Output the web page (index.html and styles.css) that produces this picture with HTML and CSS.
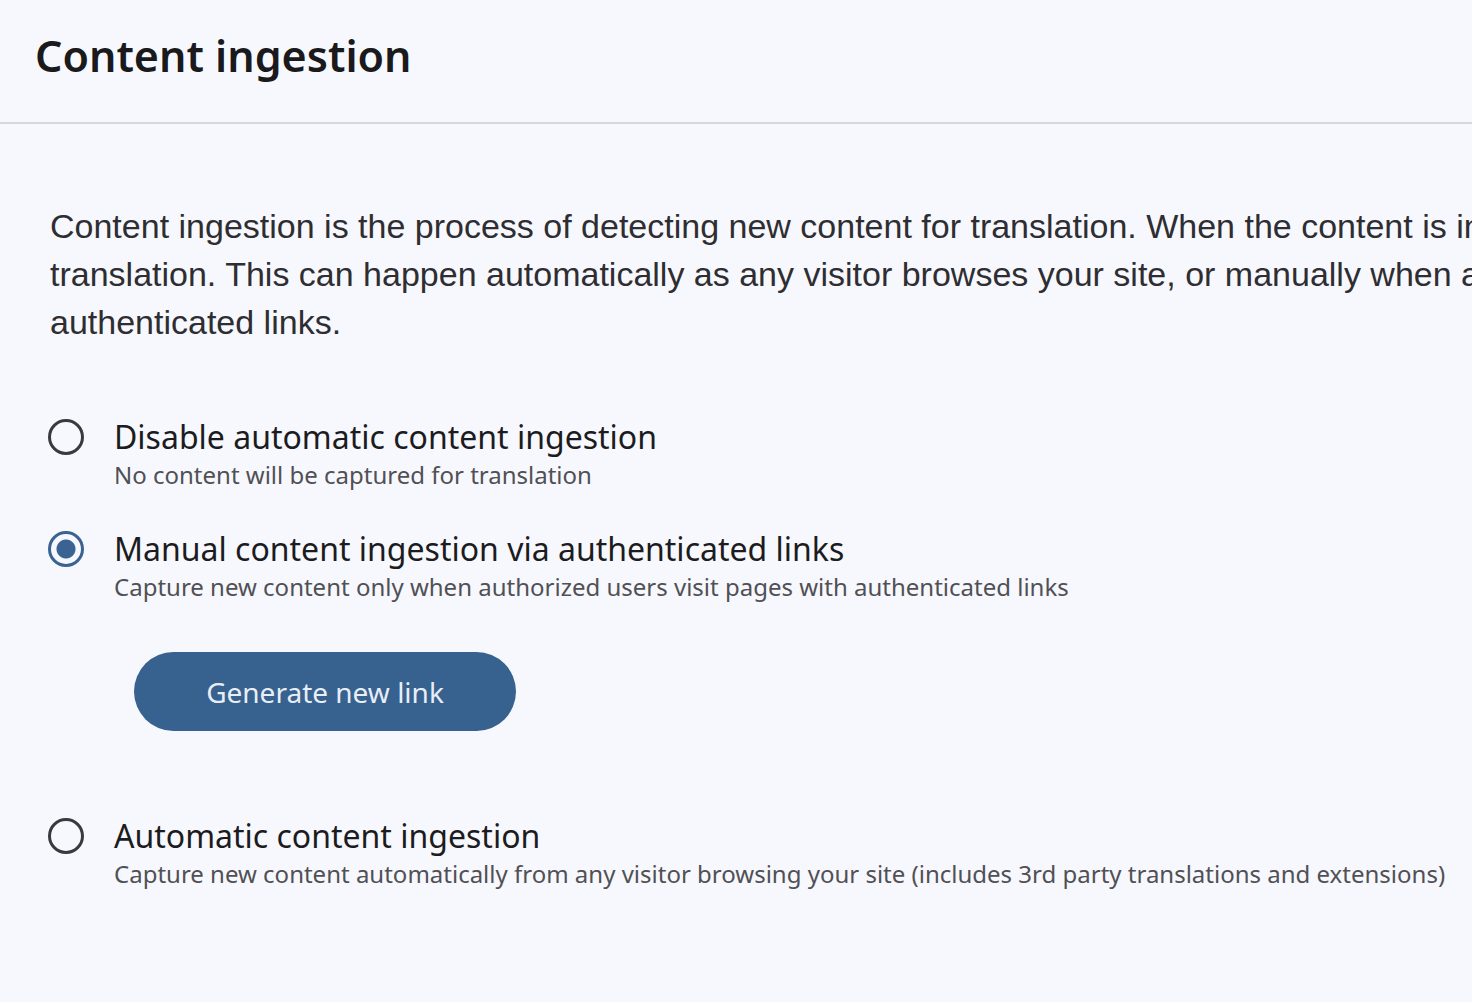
FILE: index.html
```html
<!DOCTYPE html>
<html lang="en">
<head>
    <meta charset="UTF-8">
    <meta name="viewport" content="width=device-width, initial-scale=1.0">
    <title>Content ingestion</title>
    <link rel="stylesheet" href="styles.css">
</head>
<body>
    <div class="page-header">
        <h1>Content ingestion</h1>
    </div>

    <div class="page-body">
        <p class="intro">
            Content ingestion is the process of detecting new content for translation. When the content is ingested, it is queued up for<br>
            translation. This can happen automatically as any visitor browses your site, or manually when authorized users visit pages with<br>
            authenticated links.
        </p>

        <div class="option-list">
            <label class="option">
                <input type="radio" name="ingestion" value="disabled">
                <span class="option-text">
                    <span class="option-title">Disable automatic content ingestion</span>
                    <span class="option-desc">No content will be captured for translation</span>
                </span>
            </label>

            <label class="option">
                <input type="radio" name="ingestion" value="manual" checked>
                <span class="option-text">
                    <span class="option-title">Manual content ingestion via authenticated links</span>
                    <span class="option-desc">Capture new content only when authorized users visit pages with authenticated links</span>
                </span>
            </label>

            <div class="option-extra">
                <button class="btn-primary" type="button">Generate new link</button>
            </div>

            <label class="option">
                <input type="radio" name="ingestion" value="automatic">
                <span class="option-text">
                    <span class="option-title">Automatic content ingestion</span>
                    <span class="option-desc">Capture new content automatically from any visitor browsing your site (includes 3rd party translations and extensions)</span>
                </span>
            </label>
        </div>
    </div>
</body>
</html>
```

FILE: styles.css
```css
body {
    margin: 0;
    background-color: #f7f8fd;
    font-family: "Noto Sans", sans-serif;
    color: #1c1c1e;
    overflow: hidden;
}
.page-header {
    height: 110px;
    padding: 0 0 12px 35px;
    border-bottom: 2px solid #d6d7de;
    display: flex;
    align-items: center;
}
.page-header h1 {
    margin: 0;
    font-size: 43px;
    font-weight: 600;
    color: #1a1a1c;
}
.page-body {
    padding: 78px 0 0 50px;
}
.intro {
    margin: 0;
    font-family: "Liberation Sans", Arial, sans-serif;
    font-size: 34px;
    line-height: 48px;
    color: #2e2e32;
    white-space: nowrap;
}
.option-list {
    margin: 71px 0 0 -2px;
    display: flex;
    flex-direction: column;
}
.option {
    display: flex;
    align-items: flex-start;
    gap: 30px;
    cursor: pointer;
}
.option + .option {
    margin-top: 36px;
}
.option input {
    appearance: none;
    margin: 2px 0 0 0;
    width: 36px;
    height: 36px;
    border: 3px solid #3a3a3e;
    border-radius: 50%;
    flex-shrink: 0;
    background: transparent;
}
.option input:checked {
    border-color: #3a6391;
    background: radial-gradient(circle, #3a6391 0 9px, transparent 10px);
}
.option-text {
    display: flex;
    flex-direction: column;
}
.option-title {
    font-size: 32px;
    line-height: 40px;
    color: #1c1c1e;
}
.option-desc {
    font-size: 24px;
    line-height: 36px;
    color: #505055;
}
.option-extra {
    padding: 47px 0 85px 86px;
}
.btn-primary {
    background-color: #37618e;
    color: #e8eef6;
    border: none;
    border-radius: 40px;
    width: 382px;
    height: 79px;
    font-family: "Noto Sans", sans-serif;
    font-size: 28px;
    cursor: pointer;
}
```
